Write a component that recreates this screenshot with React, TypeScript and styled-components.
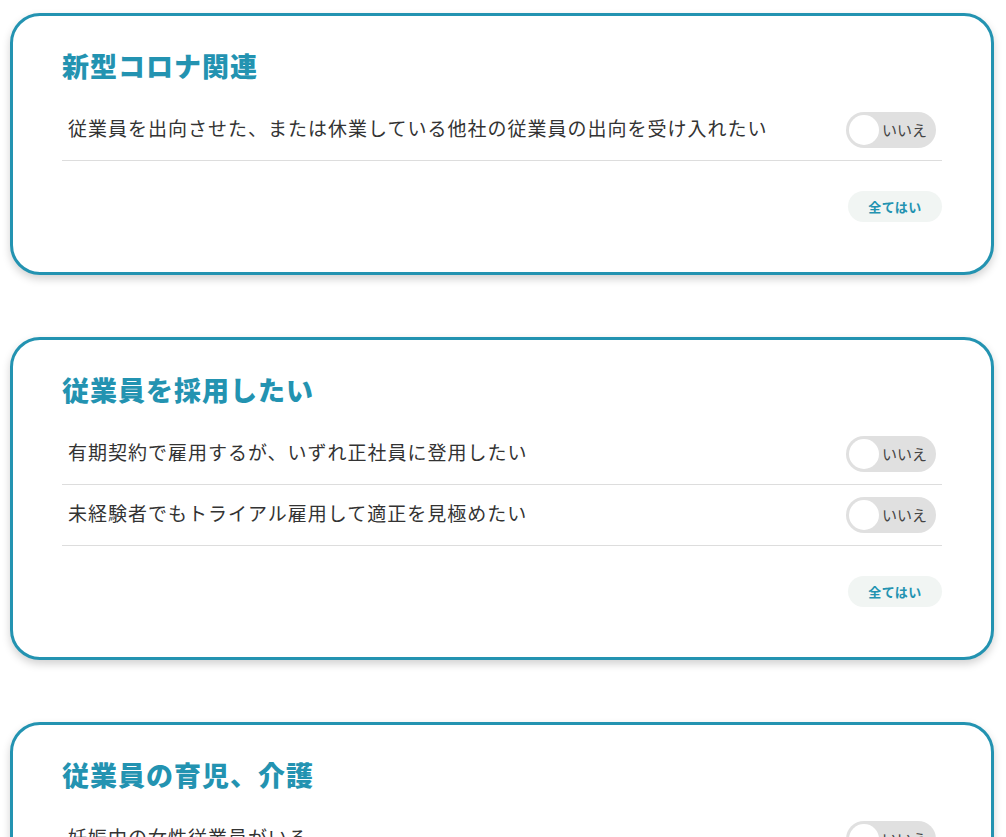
import React, { useState } from 'react';
import styled, { createGlobalStyle } from 'styled-components';

const GlobalStyle = createGlobalStyle`
    html, body {
        margin: 0;
        padding: 0;
        background: #ffffff;
    }
    body {
        font-family: 'Noto Sans CJK JP', 'Noto Sans', sans-serif;
        color: #333333;
    }
`;

type Question = {
    id: string;
    label: string;
};

type Section = {
    id: string;
    title: string;
    questions: Question[];
};

const SECTIONS: Section[] = [
    {
        id: 'corona',
        title: '新型コロナ関連',
        questions: [{ id: 'c1', label: '従業員を出向させた、または休業している他社の従業員の出向を受け入れたい' }],
    },
    {
        id: 'hire',
        title: '従業員を採用したい',
        questions: [
            { id: 'h1', label: '有期契約で雇用するが、いずれ正社員に登用したい' },
            { id: 'h2', label: '未経験者でもトライアル雇用して適正を見極めたい' },
        ],
    },
    {
        id: 'care',
        title: '従業員の育児、介護',
        questions: [
            { id: 'k1', label: '妊娠中の女性従業員がいる' },
            { id: 'k2', label: '育児休業を取得する従業員がいる' },
        ],
    },
];

const App: React.FC = () => {
    const [answers, setAnswers] = useState<Record<string, boolean>>({});

    const toggle = (id: string) => setAnswers((prev) => ({ ...prev, [id]: !prev[id] }));

    const setAllYes = (section: Section) =>
        setAnswers((prev) => {
            const next = { ...prev };
            section.questions.forEach((q) => (next[q.id] = true));
            return next;
        });

    return (
        <>
            <GlobalStyle />
            <Page>
                {SECTIONS.map((section) => (
                    <Card key={section.id}>
                        <Title>{section.title}</Title>
                        <List>
                            {section.questions.map((q) => (
                                <Row key={q.id}>
                                    <Label>{q.label}</Label>
                                    <Switch active={!!answers[q.id]} onClick={() => toggle(q.id)}>
                                        <Knob active={!!answers[q.id]} />
                                        <SwitchText active={!!answers[q.id]}>
                                            {answers[q.id] ? 'はい' : 'いいえ'}
                                        </SwitchText>
                                    </Switch>
                                </Row>
                            ))}
                        </List>
                        <Footer>
                            <AllYesButton onClick={() => setAllYes(section)}>全てはい</AllYesButton>
                        </Footer>
                    </Card>
                ))}
            </Page>
        </>
    );
};

const Page = styled.div`
    display: flex;
    flex-direction: column;
    gap: 62px;
    padding: 13px 12px 40px 10px;
`;

const Card = styled.section`
    border: 3px solid #2393b1;
    border-radius: 30px;
    background: #ffffff;
    box-shadow: 0 4px 8px rgba(0, 0, 0, 0.18);
    padding: 30px 49px 50px 49px;
`;

const Title = styled.h2`
    margin: 0 0 14px 0;
    font-size: 27px;
    line-height: 40px;
    font-weight: 900;
    letter-spacing: 1px;
    color: #2393b1;
`;

const List = styled.div`
    display: flex;
    flex-direction: column;
`;

const Row = styled.div`
    display: flex;
    align-items: center;
    justify-content: space-between;
    height: 60px;
    padding: 0 6px;
    border-bottom: 1px solid #dddddd;
`;

const Label = styled.span`
    font-size: 19px;
    line-height: 26px;
    letter-spacing: 1px;
    color: #333333;
    margin-top: -5px;
`;

const Switch = styled.button<{ active: boolean }>`
    position: relative;
    width: 90px;
    height: 36px;
    border: none;
    border-radius: 18px;
    background: ${(props) => (props.active ? '#2393b1' : '#e0e0e0')};
    padding: 0;
    cursor: pointer;
    font-family: inherit;
    flex-shrink: 0;
`;

const Knob = styled.span<{ active: boolean }>`
    position: absolute;
    top: 3px;
    left: ${(props) => (props.active ? '57px' : '3px')};
    width: 30px;
    height: 30px;
    border-radius: 50%;
    background: #ffffff;
`;

const SwitchText = styled.span<{ active: boolean }>`
    position: absolute;
    top: 0;
    ${(props) => (props.active ? 'left: 14px;' : 'left: 36px;')}
    line-height: 36px;
    font-size: 15px;
    color: ${(props) => (props.active ? '#ffffff' : '#444444')};
`;

const Footer = styled.div`
    display: flex;
    justify-content: flex-end;
    margin-top: 30px;
`;

const AllYesButton = styled.button`
    width: 94px;
    height: 31px;
    border: none;
    border-radius: 16px;
    background: #f1f5f3;
    color: #2393b1;
    font-family: inherit;
    font-size: 13px;
    font-weight: 700;
    letter-spacing: 0.5px;
    cursor: pointer;
`;

export default App;
